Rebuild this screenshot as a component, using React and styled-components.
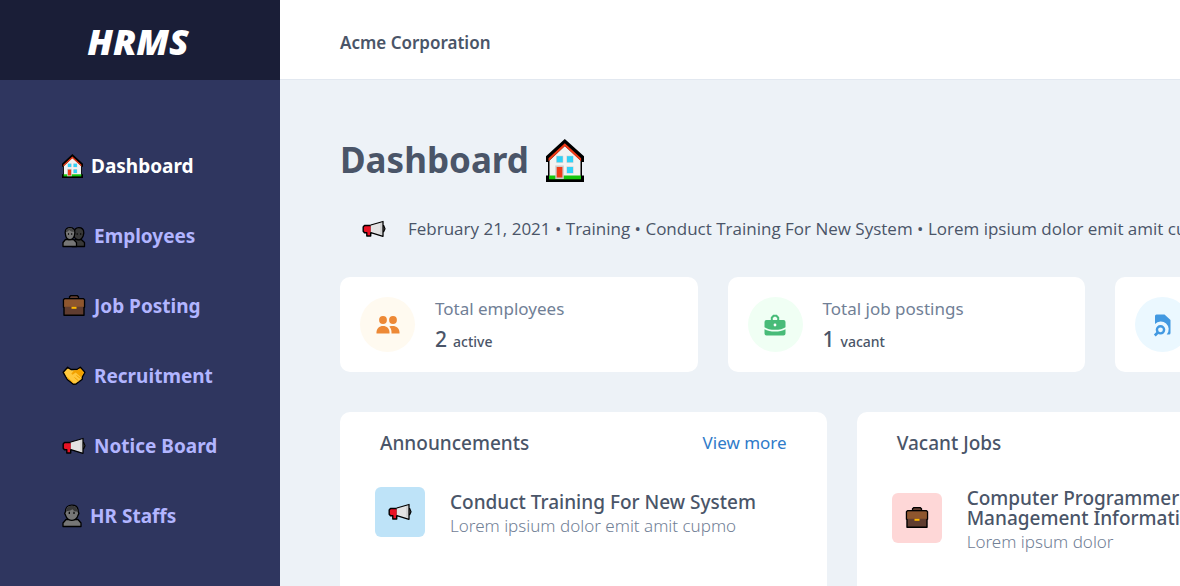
import React from "react";
import styled, { createGlobalStyle } from "styled-components";

const GlobalStyle = createGlobalStyle`
  *, *::before, *::after { box-sizing: border-box; }
  body {
    margin: 0;
    background: #edf2f7;
    color: #4a5568;
    font-family: "Noto Sans", "Open Sans", sans-serif;
    font-size: 17px;
  }
  h1, h2, h3, p, ul { margin: 0; padding: 0; }
  ul { list-style: none; }
  a { text-decoration: none; }
`;

const Page = styled.div`
  display: flex;
  min-height: 100vh;
`;

const Sidebar = styled.aside`
  flex: 0 0 280px;
  background: #2f365f;
`;

const Brand = styled.div`
  display: flex;
  align-items: center;
  justify-content: center;
  height: 80px;
  padding: 4px 4px 0 0;
  background: #1a1e37;
  color: #fff;
  font: italic 800 36px/40px "Open Sans", sans-serif;
`;

const NavList = styled.ul`
  padding: 51px 0 0 62px;
`;

const NavLink = styled.a`
  display: flex;
  align-items: center;
  gap: 8px;
  height: 70px;
  color: ${(p) => (p.$active ? "#fff" : "#b2b5ff")};
  font-size: 19px;
  font-weight: 700;
  line-height: 24px;
`;

const Content = styled.div`
  display: flex;
  flex: 1 1 0;
  flex-direction: column;
  min-width: 0;
  overflow: hidden;
`;

const TopBar = styled.header`
  display: flex;
  flex: none;
  align-items: center;
  height: 80px;
  padding: 6px 60px 0;
  border-bottom: 1px solid #e2e8f0;
  background: #fff;
  font-weight: 600;
`;

const Main = styled.main`
  display: flex;
  flex: 1;
  flex-direction: column;
  padding: 55px 60px 40px;
`;

const PageTitle = styled.h1`
  display: flex;
  align-items: center;
  gap: 17px;
  font-size: 35px;
  font-weight: 700;
  line-height: 50px;
`;

const Ticker = styled.p`
  display: flex;
  align-items: center;
  gap: 22px;
  margin-top: 28px;
  padding-left: 22px;
  font: 500 17px/32px "Open Sans", "Noto Sans", sans-serif;
  white-space: nowrap;
`;

const CardGrid = styled.section`
  display: grid;
  grid-template-columns: repeat(${(p) => p.$columns}, 1fr);
  gap: 30px;
  min-width: 1520px;
`;

const StatGrid = styled(CardGrid)`
  margin-top: 32px;
`;

const PanelGrid = styled(CardGrid)`
  flex: 1;
  margin-top: 40px;
`;

const Card = styled.article`
  border-radius: 10px;
  background: #fff;
`;

const StatCard = styled(Card)`
  display: flex;
  align-items: center;
  gap: 20px;
  height: 95px;
  padding: 20px;
`;

const StatBadge = styled.div`
  display: flex;
  flex: 0 0 55px;
  align-items: center;
  justify-content: center;
  height: 55px;
  border-radius: 50%;
  background: ${(p) => p.$tint};
  color: ${(p) => p.$ink};
`;

const StatText = styled.div`
  padding-top: 2px;
`;

const StatLabel = styled.p`
  color: #718096;
  font-weight: 450;
  line-height: 30px;
`;

const StatValue = styled.p`
  font-size: 14px;
  font-weight: 500;
  line-height: 30px;
`;

const StatNumber = styled.span`
  margin-right: 6px;
  font-size: 21px;
`;

const Panel = styled(Card)`
  min-height: 260px;
`;

const PanelHead = styled.header`
  display: flex;
  align-items: center;
  justify-content: space-between;
  height: 62px;
  padding: 0 40px;
`;

const PanelTitle = styled.h2`
  font-size: 19px;
  font-weight: 500;
  line-height: 24px;
`;

const MoreLink = styled.a`
  color: #2f7bc9;
  font-weight: 450;
  line-height: 24px;
`;

const ListItem = styled.li`
  display: flex;
  align-items: center;
  gap: 25px;
  min-height: 76px;
  padding: 8px 35px;
`;

const Tile = styled.div`
  display: flex;
  flex: 0 0 50px;
  align-items: center;
  justify-content: center;
  height: 50px;
  border-radius: 6px;
  background: ${(p) => p.$tint};
`;

const ItemText = styled.div`
  padding-top: 6px;
`;

const ItemTitle = styled.h3`
  font-size: 19px;
  font-weight: 500;
  line-height: 20px;
`;

const ItemNote = styled.p`
  margin-top: 2px;
  color: #718096;
  font-weight: 330;
  line-height: 24px;
`;

const Glyph = styled.svg`
  display: block;
  flex: none;
`;

function House({ width = 21, height = 24 }) {
  return (
    <Glyph width={width} height={height} viewBox="0 0 38 43" aria-hidden="true">
      <path d="M18.8 0 38 17.3V23h-2v13.5h2V43H0v-6.500h2V23H0v-5.700z" fill="#000" />
      <path d="M18.800 7 34.500 21.500V38h-31V21.500z" fill="#f2f2f2" />
      <path d="M2.500 19.300 18.800 4.200l16.300 15.100v3L18.800 7.300 2.500 22.300z" fill="#f03a17" />
      <path d="M3 36.500h32v3.800H3z" fill="#16c60c" />
      <path d="M9.300 26.500h8.500V40H9.300z" fill="#ccc" />
      <path d="M10.700 28h5.700v10.500h-5.700z" fill="#f03a17" />
      <path d="M10.200 16.800h7v7h-7zM20.500 16.800h7v7h-7zM20.500 27.500h7v7h-7z" fill="#ccc" />
      <path d="M10.700 17.300h6v6h-6zM21 17.300h6v6h-6zM21 28h6v6h-6z" fill="#31d2f7" />
    </Glyph>
  );
}

function Megaphone() {
  return (
    <Glyph width="24" height="24" viewBox="0 0 24 24" aria-hidden="true">
      <path d="M19.500 8.700h2.200l1.300 3-1.300 3h-2.200z" fill="#777" stroke="#000" strokeWidth="1.200" />
      <path d="M2.500 8.500h7v7.200H8.700v3.300H4.800v-3.300H2.500L1.200 14.200V10z" fill="#e81224" stroke="#000" strokeWidth="1.400" strokeLinejoin="round" />
      <path d="M8.800 8 21 4.500v14.800L8.800 15.600z" fill="#e3e3e3" />
      <path d="M8.800 8 21 4.500v14.800L8.800 15.600" fill="none" stroke="#000" strokeWidth="1.300" strokeLinejoin="round" />
      <path d="M19 6v11.800" stroke="#ccc" strokeWidth="1.500" />
    </Glyph>
  );
}

function Briefcase() {
  return (
    <Glyph width="24" height="24" viewBox="0 0 24 24" aria-hidden="true">
      <path d="M7.500 5V2.800L8.700 1.700h6.600l1.200 1.100V5" fill="#603d30" stroke="#000" strokeWidth="1.300" />
      <path d="M10 4.500h4.500" stroke="#000" strokeWidth="1" />
      <path d="M2.500 4.800h19l1 1v7.500H22v8H2v-8h-.5V5.800z" fill="#603d30" stroke="#000" strokeWidth="1.400" strokeLinejoin="round" />
      <path d="M2.900 5.500h18.200l.7.600v6.700H2.200V6.100z" fill="#8e562e" />
      <path d="M9.500 12.800h5v2h-5z" fill="#ffb900" />
    </Glyph>
  );
}

function People() {
  return (
    <Glyph width="24" height="24" viewBox="0 0 24 24" aria-hidden="true">
      <g stroke="#000" strokeWidth="1.300" strokeLinejoin="round">
        <path d="M10 22.500v-5l3-1.800h6.500l3 2.800v4z" fill="#383838" />
        <path d="M12 9c0-3.500 2-5.300 4.700-5.300S21.800 5.500 21.800 9l-.7 3c-1 2.500-2.500 3.800-4.400 3.800S12.500 14 12 12z" fill="#383838" />
        <path d="M1 22.500v-4l2.500-3h8l3 3v4z" fill="#767676" />
        <path d="M3.200 8.500c0-3.300 2-4.900 4.700-4.900s5 1.800 5 5.200l-.6 3.200c-1 2.400-2.500 3.700-4.400 3.700S4.500 14.500 3.700 12z" fill="#767676" />
      </g>
      <path d="M3.800 8.200c0-2.700 1.600-4 4.200-4 2.200 0 3.800 1 4.300 3.600C9.500 7.800 8 6.800 7 6 6.300 7.400 5.200 8 3.800 8.200z" fill="#454545" />
      <path d="M6.500 9.200v1.600M9.700 9.200v1.600M15.200 9.200v1.600M18.700 9.200v1.600" stroke="#000" strokeWidth="1.100" />
    </Glyph>
  );
}

function Person() {
  return (
    <Glyph width="20" height="24" viewBox="0 0 20 24" aria-hidden="true">
      <g stroke="#000" strokeWidth="1.300" strokeLinejoin="round">
        <path d="M1 22.500V19l3-3.500h12l3 3.500v3.500z" fill="#767676" />
        <path d="M3.500 7.500c0-4.300 2.700-6.300 6.300-6.300s6.400 2.200 6.400 6.300l.7 2-.8 1.600c-1 3.300-3.500 5.200-6.300 5.200S4.500 14.400 3.500 11.100L2.700 9.500z" fill="#767676" />
      </g>
      <path d="M4.100 7.500c0-3.700 2.400-5.700 5.700-5.700s5.800 2 5.800 5.700c-2.800 0-4-.8-5.200-2.300C8.200 7 6.200 6.500 4.100 7.500z" fill="#383838" />
      <path d="M7.300 7.800v2.200M12 7.800v2.200" stroke="#000" strokeWidth="1.200" />
    </Glyph>
  );
}

function Handshake() {
  return (
    <Glyph width="24" height="24" viewBox="0 0 24 24" aria-hidden="true">
      <path
        d="M1.200 8.300 5.700 3.300 9 5.500h6l3.300-2.200 4.500 5-2.500 4.500v2.500L14 20l-2.700.3-6-4.800-1.800-3z"
        fill="#ffc83d"
        stroke="#000"
        strokeWidth="1.400"
        strokeLinejoin="round"
      />
      <path d="M15 6.200 18.200 4.200 22 8.400l-2.300 4-1 .5-5-4.400-3.200 2.300-1.200-1L12.200 6.200z" fill="#f2a100" />
      <path d="m5.200 13.500 6 5.300M12.500 13.500l4.200 3.500M14.500 11.500l4 3" stroke="#f2a100" strokeWidth="1" />
    </Glyph>
  );
}

function UsersIcon() {
  return (
    <Glyph width="24" height="24" viewBox="0 0 24 24" fill="currentColor" aria-hidden="true">
      <circle cx="7" cy="7" r="3.900" />
      <circle cx="17" cy="7" r="3.900" />
      <path d="M.5 20.500v-1.200C.5 15.500 3.200 13 7 13s6.500 2.500 6.500 6.300v1.200z" />
      <path d="M15.500 20.500v-1.300c0-2.300-.8-4.400-2.200-5.800 1-.3 2.100-.4 3.200-.4 4.200 0 7 2.500 7 6.300v1.200z" />
    </Glyph>
  );
}

function ToolboxIcon() {
  return (
    <Glyph width="24" height="24" viewBox="0 0 24 24" fill="currentColor" aria-hidden="true">
      <path d="M8.800 8V4.700l1.800-1.900h2.800l1.800 1.900V8" fill="none" stroke="currentColor" strokeWidth="2" />
      <path d="M3.500 7h17a2 2 0 0 1 2 2v5.200c-2.200 1.700-6 2.600-10.500 2.600S3.700 15.900 1.500 14.200V9a2 2 0 0 1 2-2z" />
      <path d="M1.500 16.300c2.800 1.500 6.400 2.300 10.500 2.300s7.700-.8 10.500-2.300v4.200a2 2 0 0 1-2 2h-17a2 2 0 0 1-2-2z" />
      <circle cx="12" cy="12" r="1.400" fill="#fff" />
    </Glyph>
  );
}

function FileSearchIcon() {
  return (
    <Glyph width="24" height="24" viewBox="0 0 24 24" aria-hidden="true">
      <path d="M5.500 1.500h8L19.500 7v13a1.500 1.500 0 0 1-1.500 1.500h-2.300A7.300 7.300 0 0 0 4 11V3a1.500 1.500 0 0 1 1.500-1.500z" fill="currentColor" />
      <circle cx="9.500" cy="16.800" r="3.600" fill="none" stroke="currentColor" strokeWidth="2.400" />
      <path d="m6.800 19.500-3 3" stroke="currentColor" strokeWidth="2.600" />
    </Glyph>
  );
}

const navItems = [
  { label: "Dashboard", Icon: House, active: true },
  { label: "Employees", Icon: People },
  { label: "Job Posting", Icon: Briefcase },
  { label: "Recruitment", Icon: Handshake },
  { label: "Notice Board", Icon: Megaphone },
  { label: "HR Staffs", Icon: Person },
];

const stats = [
  { label: "Total employees", count: 2, unit: "active", Icon: UsersIcon, tint: "#fffaf0", ink: "#ed8936" },
  { label: "Total job postings", count: 1, unit: "vacant", Icon: ToolboxIcon, tint: "#f0fff4", ink: "#48bb78" },
  { Icon: FileSearchIcon, tint: "#ebf8ff", ink: "#4299e1" },
];

export default function App() {
  return (
    <>
      <GlobalStyle />
      <Page>
        <Sidebar>
          <Brand>HRMS</Brand>
          <nav>
            <NavList>
              {navItems.map(({ label, Icon, active }) => (
                <li key={label}>
                  <NavLink href="#" $active={active} aria-current={active ? "page" : undefined}>
                    <Icon />
                    {label}
                  </NavLink>
                </li>
              ))}
            </NavList>
          </nav>
        </Sidebar>
        <Content>
          <TopBar>Acme Corporation</TopBar>
          <Main>
            <PageTitle>
              Dashboard
              <House width={38} height={43} />
            </PageTitle>
            <Ticker>
              <Megaphone />
              February 21, 2021 • Training • Conduct Training For New System • Lorem ipsium dolor emit amit cupmo
            </Ticker>
            <StatGrid $columns={4}>
              {stats.map(({ label, count, unit, Icon, tint, ink }) => (
                <StatCard key={tint}>
                  <StatBadge $tint={tint} $ink={ink}>
                    <Icon />
                  </StatBadge>
                  {label && (
                    <StatText>
                      <StatLabel>{label}</StatLabel>
                      <StatValue>
                        <StatNumber>{count}</StatNumber>
                        {unit}
                      </StatValue>
                    </StatText>
                  )}
                </StatCard>
              ))}
            </StatGrid>
            <PanelGrid $columns={3}>
              <Panel>
                <PanelHead>
                  <PanelTitle>Announcements</PanelTitle>
                  <MoreLink href="#">View more</MoreLink>
                </PanelHead>
                <ul>
                  <ListItem>
                    <Tile $tint="#bee3f8">
                      <Megaphone />
                    </Tile>
                    <ItemText>
                      <ItemTitle>Conduct Training For New System</ItemTitle>
                      <ItemNote>Lorem ipsium dolor emit amit cupmo</ItemNote>
                    </ItemText>
                  </ListItem>
                </ul>
              </Panel>
              <Panel>
                <PanelHead>
                  <PanelTitle>Vacant Jobs</PanelTitle>
                </PanelHead>
                <ul>
                  <ListItem>
                    <Tile $tint="#fed7d7">
                      <Briefcase />
                    </Tile>
                    <ItemText>
                      <ItemTitle>
                        Computer Programmer
                        <br />
                        Management Information
                      </ItemTitle>
                      <ItemNote>Lorem ipsum dolor</ItemNote>
                    </ItemText>
                  </ListItem>
                </ul>
              </Panel>
            </PanelGrid>
          </Main>
        </Content>
      </Page>
    </>
  );
}
